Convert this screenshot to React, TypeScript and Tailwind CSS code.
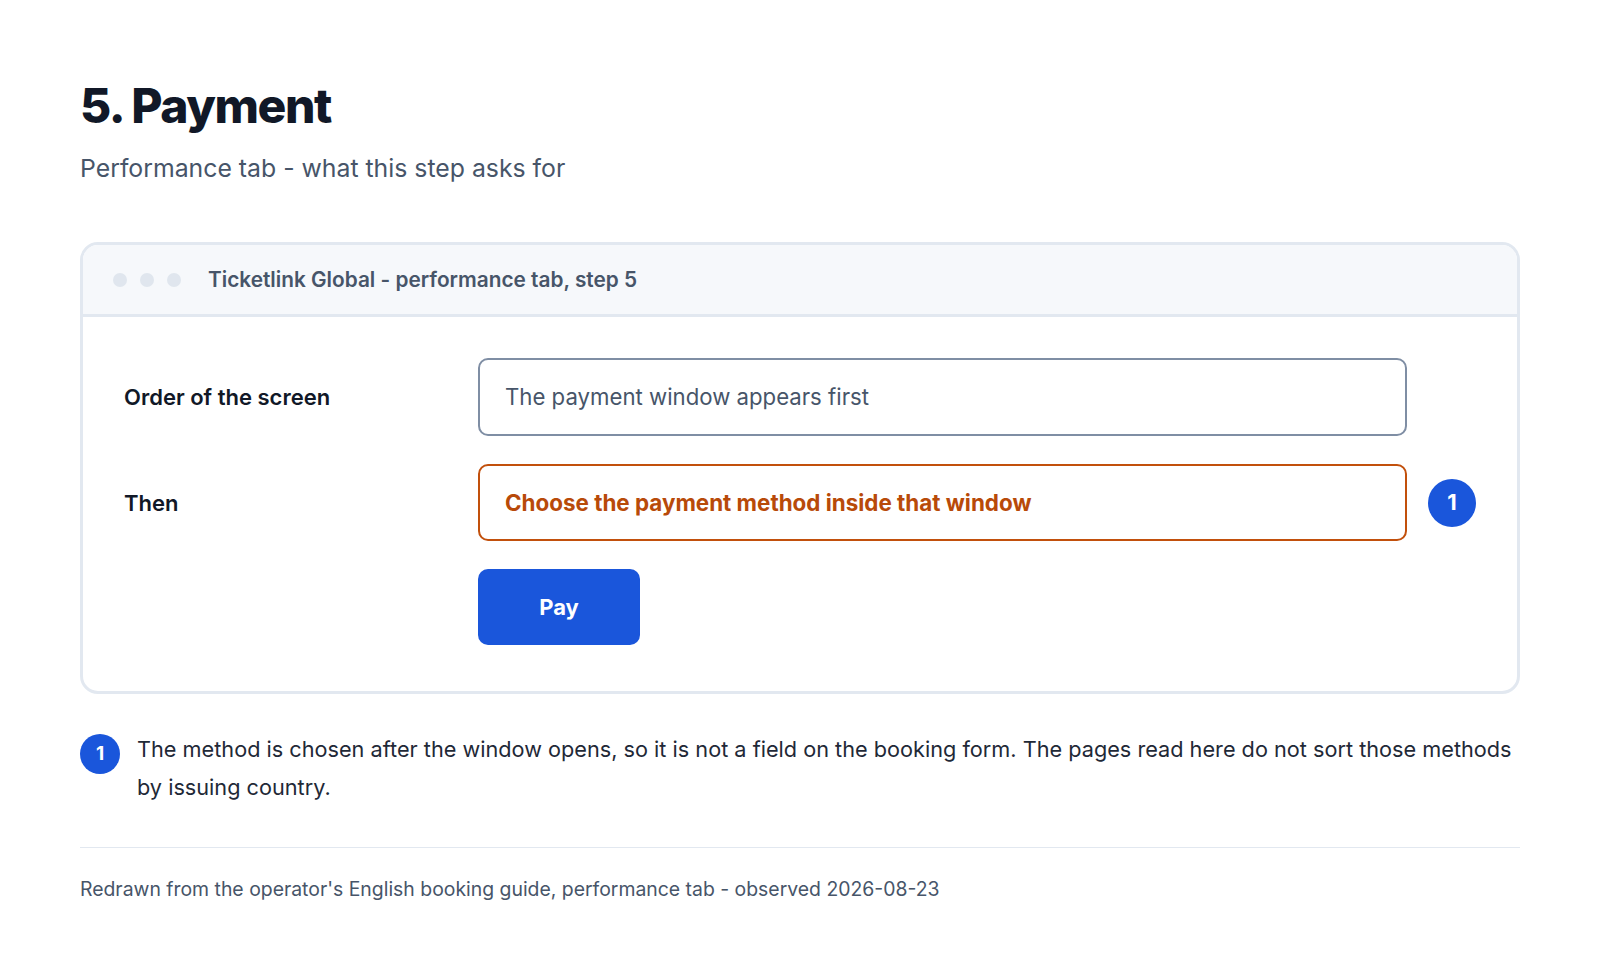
import React from "react";

export default function App() {
  return (
    <div className="min-h-screen bg-white text-[#111827]" style={{ fontFamily: "Inter, 'Noto Sans', sans-serif" }}>
      <div className="px-[80px] pt-[77px]">
        <h1 className="text-[48px] leading-[58px] font-extrabold tracking-[-0.03em] text-[#111827]">5. Payment</h1>
        <p className="mt-[17px] text-[24.8px] leading-[32px] text-[#475569]">Performance tab - what this step asks for</p>

        <div className="mt-[58px] rounded-[18px] border-[3px] border-[#e2e8f0] overflow-hidden">
          <div className="h-[72px] bg-[#f6f8fb] border-b-[3px] border-[#e2e8f0] flex items-center pl-[30px] pt-[1px]">
            <div className="flex items-center gap-[13px]">
              <span className="block w-[14px] h-[14px] rounded-full bg-[#e0e6ee]" />
              <span className="block w-[14px] h-[14px] rounded-full bg-[#e0e6ee]" />
              <span className="block w-[14px] h-[14px] rounded-full bg-[#e0e6ee]" />
            </div>
            <span className="ml-[27px] text-[20.8px] leading-[28px] font-semibold text-[#475569]">
              Ticketlink Global - performance tab, step 5
            </span>
          </div>

          <div className="pl-[40px] pr-[41px] pt-[41px] pb-[46px]">
            <div className="grid grid-cols-[355px_1fr_69px] gap-y-[28px] items-center">
              <div className="pl-[1px] text-[22px] leading-[30px] font-semibold text-[#111827]">Order of the screen</div>
              <div className="h-[78px] rounded-[10px] border-2 border-[#7f8ea4] flex items-center px-[25px] text-[22.2px] leading-[30px] text-[#475569]">
                The payment window appears first
              </div>
              <div />

              <div className="pl-[1px] text-[22px] leading-[30px] font-semibold text-[#111827]">Then</div>
              <div className="h-[77px] rounded-[10px] border-2 border-[#c2500c] flex items-center px-[25px] text-[22.4px] leading-[30px] font-bold text-[#b84a09]">
                Choose the payment method inside that window
              </div>
              <div className="justify-self-end w-[48px] h-[48px] rounded-full bg-[#1a56db] text-white flex items-center justify-center text-[22px] font-bold">
                1
              </div>

              <div />
              <div>
                <button className="w-[162px] h-[76px] rounded-[10px] bg-[#1a56db] text-white text-[22px] font-bold">
                  Pay
                </button>
              </div>
              <div />
            </div>
          </div>
        </div>

        <div className="mt-[36px] flex items-start gap-[17px]">
          <div className="mt-[4px] shrink-0 w-[40px] h-[40px] rounded-full bg-[#1a56db] text-white flex items-center justify-center text-[19px] font-bold">
            1
          </div>
          <p className="text-[21.7px] leading-[38px] text-[#1f2937]">
            The method is chosen after the window opens, so it is not a field on the booking form. The pages read here do not sort those methods by issuing country.
          </p>
        </div>

        <div className="mt-[41px] h-px bg-[#e2e8f0]" />

        <p className="mt-[27px] text-[19.4px] leading-[28px] text-[#475569]">
          Redrawn from the operator's English booking guide, performance tab - observed 2026-08-23
        </p>
      </div>
    </div>
  );
}
